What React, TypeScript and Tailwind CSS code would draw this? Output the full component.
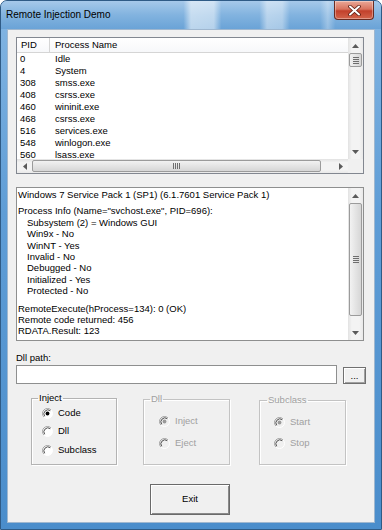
import React from 'react';

const procs: [string, string][] = [
  ['0', 'Idle'],
  ['4', 'System'],
  ['308', 'smss.exe'],
  ['408', 'csrss.exe'],
  ['460', 'wininit.exe'],
  ['468', 'csrss.exe'],
  ['516', 'services.exe'],
  ['548', 'winlogon.exe'],
  ['560', 'lsass.exe'],
];

function Arrow({ dir }: { dir: 'up' | 'down' | 'left' | 'right' }) {
  if (dir === 'up' || dir === 'down') {
    return (
      <svg width="7" height="4" viewBox="0 0 7 4">
        <path d={dir === 'up' ? 'M0 4L3.5 0L7 4Z' : 'M0 0L7 0L3.5 4Z'} fill="#5a5a5a" />
      </svg>
    );
  }
  return (
    <svg width="4" height="7" viewBox="0 0 4 7">
      <path d={dir === 'left' ? 'M4 0L4 7L0 3.5Z' : 'M0 0L4 3.5L0 7Z'} fill="#5a5a5a" />
    </svg>
  );
}

function VScroll({ thumb }: { thumb: string }) {
  return (
    <div className="w-[15px] flex flex-col bg-[linear-gradient(90deg,#e2e2e2,#f3f3f3_25%,#f3f3f3_75%,#e9e9e9)]">
      <div className="h-[15px] flex items-center justify-center">
        <Arrow dir="up" />
      </div>
      <div className="flex-1 px-px">
        <div
          className={`${thumb} rounded-[2px] border border-[#9b9b9b] bg-[linear-gradient(90deg,#f2f2f2,#e4e4e4_50%,#d6d6d6)] flex items-center justify-center`}
        >
          <svg width="6" height="7" viewBox="0 0 6 7">
            <path d="M0 0.5H6M0 2.5H6M0 4.5H6M0 6.5H6" stroke="#6e6e6e" strokeWidth="1" />
          </svg>
        </div>
      </div>
      <div className="h-[15px] flex items-center justify-center">
        <Arrow dir="down" />
      </div>
    </div>
  );
}

function Radio({ checked, disabled, label }: { checked?: boolean; disabled?: boolean; label: string }) {
  return (
    <div className="flex items-center h-[12px] gap-[5px]">
      <svg width="11" height="11" viewBox="0 0 11 11">
        <circle cx="5.5" cy="5.5" r="5" fill={disabled ? '#f0f0f0' : '#ffffff'} />
        <path d="M9.04 1.96A5 5 0 0 0 1.96 9.04" fill="none" stroke="#a0a0a0" strokeWidth="1" />
        <path d="M8.3 2.7A4 4 0 0 0 2.7 8.3" fill="none" stroke="#505050" strokeWidth="1" />
        <path d="M9.04 1.96A5 5 0 0 1 1.96 9.04" fill="none" stroke="#ffffff" strokeWidth="1" />
        {checked && <circle cx="5.5" cy="5.5" r="1.9" fill={disabled ? '#9a9a9a' : '#000000'} />}
      </svg>
      <span className={disabled ? 'text-[#a0a0a0]' : 'text-black'}>{label}</span>
    </div>
  );
}

export default function App() {
  return (
    <div className="w-[382px] h-[530px] flex flex-col overflow-hidden rounded-t-[7px] border border-[#2f5b86] bg-[linear-gradient(180deg,#84b6e3,#5f9dd6_40%,#4a8dcb)] font-['Liberation_Sans',Arial,sans-serif] text-[9.5px] text-black">
      {/* title bar */}
      <div className="h-[28px] flex items-start justify-between bg-[linear-gradient(90deg,transparent_48%,rgba(255,255,255,0.55)_50%,rgba(255,255,255,0.5)_56%,transparent_58%,transparent_68%,rgba(255,255,255,0.45)_70%,rgba(255,255,255,0.4)_74%,transparent_76%,transparent_84%,rgba(255,255,255,0.3)_86%,transparent_88%),linear-gradient(180deg,#a6c9ea,#82b3df_50%,#6aa3d7)]">
        <div className="pl-[5px] pt-[7px] text-[10px] leading-[14px] text-black font-['Liberation_Sans',Arial,sans-serif]">
          Remote Injection Demo
        </div>
        <div className="mr-[7px] w-[40px] h-[19px] rounded-b-[4px] border border-t-0 border-[#6a2b21] bg-[linear-gradient(180deg,#eaa898,#d8735e_45%,#c2402b_55%,#d2644b)] flex items-center justify-center shadow-[inset_0_0_0_1px_rgba(255,255,255,0.35)]">
          <svg width="13" height="11" viewBox="0 0 13 11">
            <path d="M2 1.5L11 9.5M11 1.5L2 9.5" stroke="#5a1c12" strokeWidth="3.6" strokeLinecap="round" />
            <path d="M2 1.5L11 9.5M11 1.5L2 9.5" stroke="#ffffff" strokeWidth="2" strokeLinecap="round" />
          </svg>
        </div>
      </div>

      {/* client area */}
      <div className="mx-[6px] mb-[6px] flex-1 flex flex-col bg-[#f0f0f0] border border-[#9fb7cf]">
        {/* process list */}
        <div className="ml-[8px] mt-[7px] w-[348px] h-[137px] border border-[#828790] bg-white flex flex-col">
          <div className="flex-1 flex min-h-0">
            <div className="flex-1 flex flex-col overflow-hidden">
              <div className="h-[15px] flex border-b border-[#d5d5d5] bg-[linear-gradient(180deg,#ffffff,#f7f8fa)]">
                <div className="w-[33px] pl-[4px] leading-[14px] border-r border-[#d5d5d5]">PID</div>
                <div className="pl-[5px] leading-[14px]">Process Name</div>
              </div>
              {procs.map(([pid, name]) => (
                <div key={pid} className="h-[12px] flex leading-[12px] shrink-0">
                  <div className="w-[33px] pl-[3px]">{pid}</div>
                  <div className="pl-[5px]">{name}</div>
                </div>
              ))}
            </div>
            <VScroll thumb="h-[14px]" />
          </div>
          <div className="h-[14px] flex">
            <div className="flex-1 flex bg-[linear-gradient(180deg,#e2e2e2,#f3f3f3_25%,#f3f3f3_75%,#e9e9e9)]">
              <div className="w-[15px] flex items-center justify-center">
                <Arrow dir="left" />
              </div>
              <div className="flex-1 py-px pr-[12px]">
                <div className="h-full rounded-[2px] border border-[#9b9b9b] bg-[linear-gradient(180deg,#f2f2f2,#e4e4e4_50%,#d6d6d6)] flex items-center justify-center">
                  <svg width="7" height="6" viewBox="0 0 7 6">
                    <path d="M0.5 0V6M2.5 0V6M4.5 0V6M6.5 0V6" stroke="#6e6e6e" strokeWidth="1" />
                  </svg>
                </div>
              </div>
              <div className="w-[15px] flex items-center justify-center">
                <Arrow dir="right" />
              </div>
            </div>
            <div className="w-[15px] bg-[#f0f0f0]" />
          </div>
        </div>

        {/* output edit */}
        <div className="ml-[8px] mt-[13px] w-[348px] h-[154px] border border-[#8e8f8f] bg-white flex">
          <div className="flex-1 pl-px pt-px leading-[11.4px]">
            <div>Windows 7 Service Pack 1 (SP1) (6.1.7601 Service Pack 1)</div>
            <div className="mt-[5px]">Process Info (Name=&quot;svchost.exe&quot;, PID=696):</div>
            <div className="pl-[9px]">
              <div>Subsystem (2) = Windows GUI</div>
              <div>Win9x - No</div>
              <div>WinNT - Yes</div>
              <div>Invalid - No</div>
              <div>Debugged - No</div>
              <div>Initialized - Yes</div>
              <div>Protected - No</div>
            </div>
            <div className="mt-[6px]">RemoteExecute(hProcess=134): 0 (OK)</div>
            <div>Remote code returned: 456</div>
            <div>RDATA.Result: 123</div>
          </div>
          <VScroll thumb="h-[113px]" />
        </div>

        {/* dll path */}
        <div className="ml-[8px] mt-[11px] leading-[12px]">Dll path:</div>
        <div className="ml-[8px] mt-px flex items-start gap-[6px]">
          <div className="w-[321px] h-[19px] border border-[#8e8f8f] bg-white" />
          <div className="mt-[2px] w-[23px] h-[17px] border border-[#707070] bg-[#f0f0f0] shadow-[inset_1px_1px_0_#ffffff,inset_-1px_-1px_0_#a0a0a0] flex items-center justify-center leading-[10px]">
            ...
          </div>
        </div>

        {/* groups */}
        <div className="flex items-start mt-[8px]">
          <fieldset className="ml-[23px] w-[86px] h-[73px] border border-[#b3b3b3] shadow-[1px_1px_0_#ffffff,inset_1px_1px_0_#ffffff]">
            <legend className="ml-[6px] px-px leading-[12px]">Inject</legend>
            <div className="pl-[10px] pt-[3px] flex flex-col gap-[6.5px]">
              <Radio checked label="Code" />
              <Radio label="Dll" />
              <Radio label="Subclass" />
            </div>
          </fieldset>
          <fieldset className="ml-[26px] mt-px w-[87px] h-[72px] border border-[#c3c3c3] shadow-[1px_1px_0_#ffffff,inset_1px_1px_0_#ffffff]">
            <legend className="ml-[6px] px-px leading-[12px] text-[#a0a0a0]">Dll</legend>
            <div className="pl-[15px] pt-[10px] flex flex-col gap-[10px]">
              <Radio checked disabled label="Inject" />
              <Radio disabled label="Eject" />
            </div>
          </fieldset>
          <fieldset className="ml-[29px] mt-[2px] w-[87px] h-[71px] border border-[#c3c3c3] shadow-[1px_1px_0_#ffffff,inset_1px_1px_0_#ffffff]">
            <legend className="ml-[7px] px-px leading-[12px] text-[#a0a0a0]">Subclass</legend>
            <div className="pl-[14px] pt-[10px] flex flex-col gap-[9px]">
              <Radio checked disabled label="Start" />
              <Radio disabled label="Stop" />
            </div>
          </fieldset>
        </div>

        {/* exit */}
        <div className="ml-[142px] mt-[19px] w-[80px] h-[31px] border border-[#6a6a6a] bg-[#f0f0f0] shadow-[inset_1px_1px_0_#ffffff,inset_-1px_-1px_0_#8a8a8a] flex items-center justify-center">
          Exit
        </div>
      </div>
    </div>
  );
}
